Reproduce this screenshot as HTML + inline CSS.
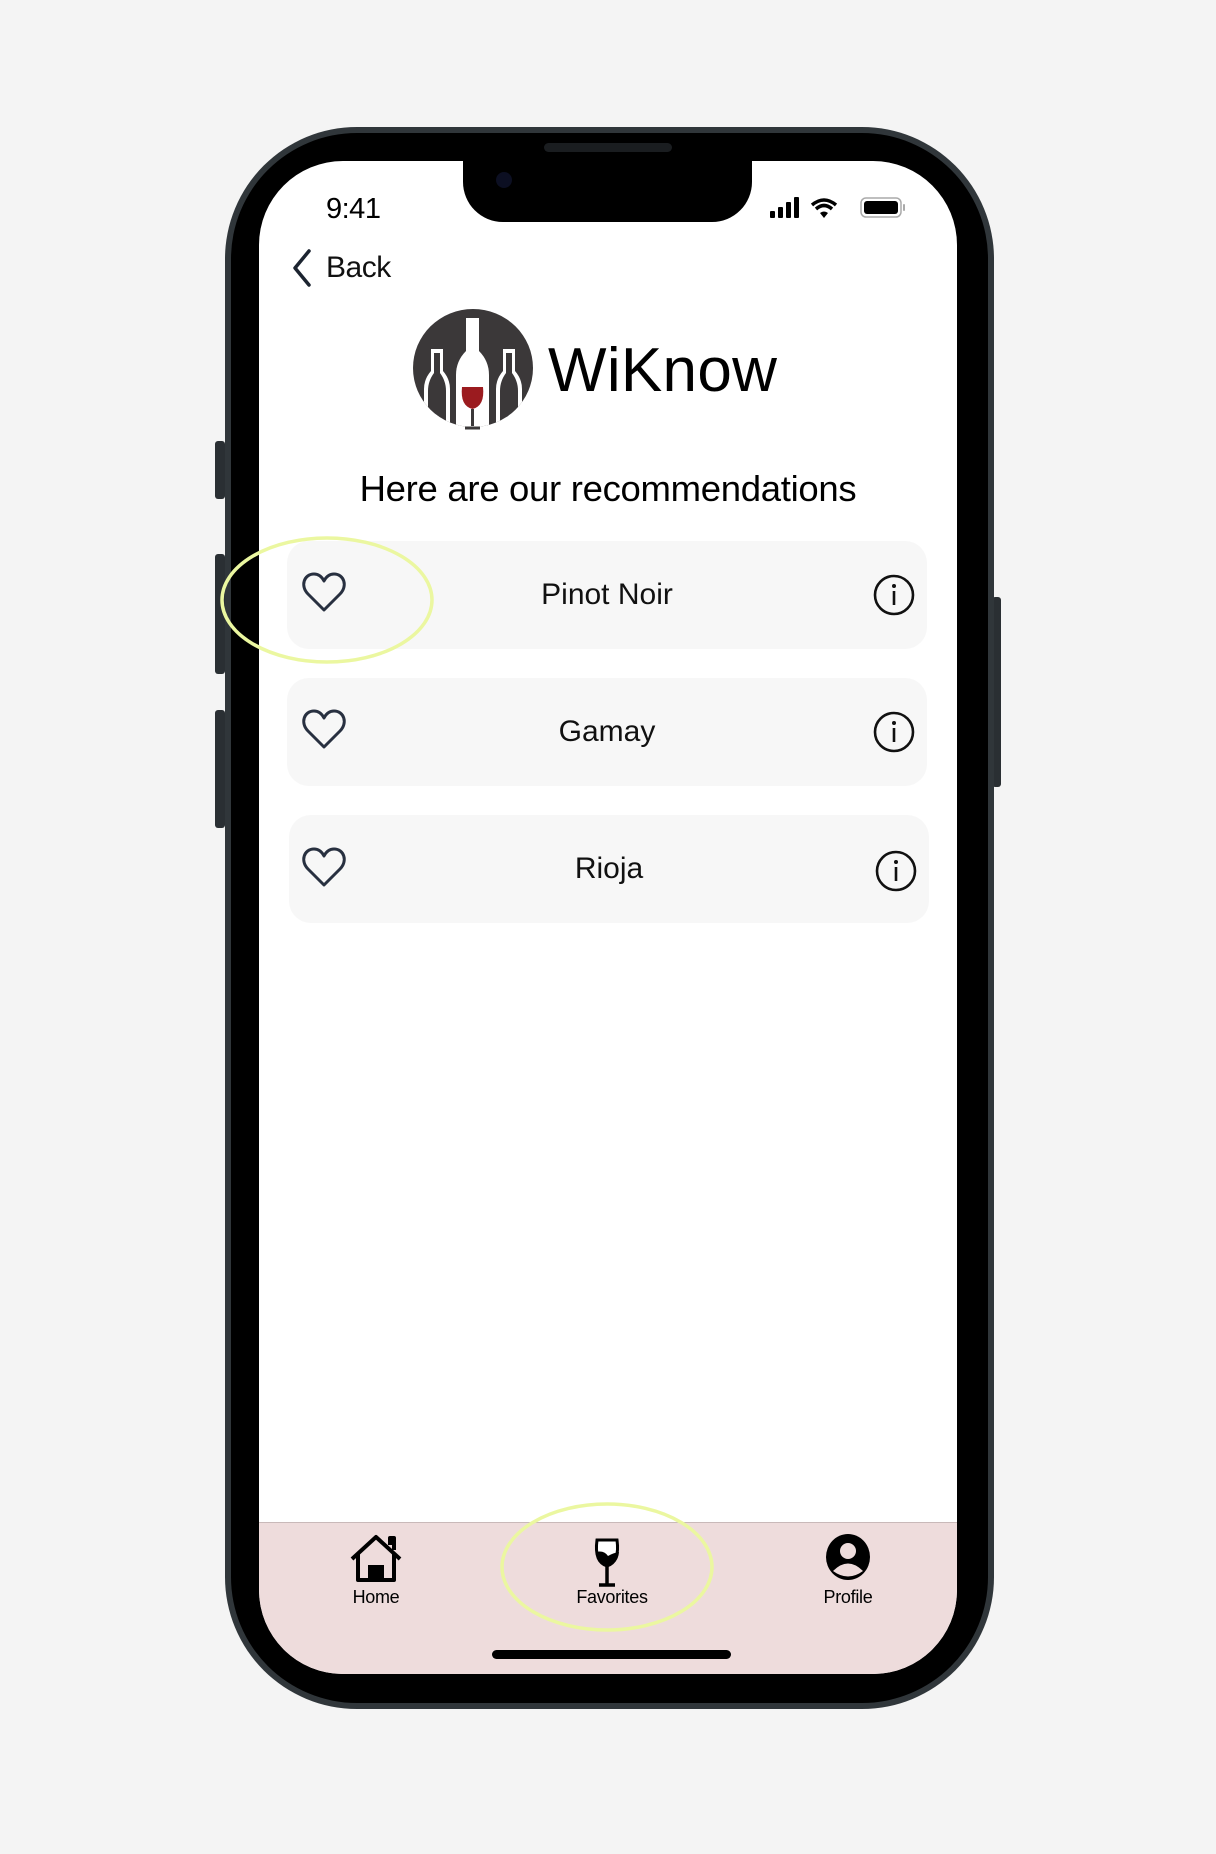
<!DOCTYPE html>
<html><head><meta charset="utf-8"><style>
*{margin:0;padding:0;box-sizing:border-box}
body{width:1216px;height:1854px;background:#f4f4f4;position:relative;overflow:hidden;font-family:"Liberation Sans",sans-serif}
.abs{position:absolute}
.btn{position:absolute;background:#2a2f33;border-radius:3px}
.card{position:absolute;left:287px;width:640px;height:108px;background:#f7f7f7;border-radius:22px}
.card .t{position:absolute;left:0;right:0;top:0;line-height:108px;text-align:center;font-size:30px;color:#111}
.lbl{position:absolute;font-size:18px;color:#000;text-align:center;width:140px;letter-spacing:-0.3px}
</style></head><body>
<div class="btn" style="left:215px;top:441px;width:10px;height:58px"></div>
<div class="btn" style="left:215px;top:554px;width:10px;height:120px"></div>
<div class="btn" style="left:215px;top:710px;width:10px;height:118px"></div>
<div class="btn" style="left:992px;top:597px;width:9px;height:190px"></div>
<div class="abs" style="left:225px;top:127px;width:769px;height:1582px;border-radius:132px;background:#30363a;"></div>
<div class="abs" style="left:231px;top:133px;width:757px;height:1570px;border-radius:126px;background:#000;"></div>
<div class="abs" style="left:259px;top:161px;width:698px;height:1513px;border-radius:84px;background:#fff;overflow:hidden">
  <div class="abs" style="left:0;top:1361px;width:698px;height:152px;background:#eedcdc;border-top:1.5px solid #c9b9b9"></div>
</div>
<div class="abs" style="left:463px;top:150px;width:289px;height:72px;background:#000;border-radius:0 0 40px 40px"></div>
<div class="abs" style="left:544px;top:143px;width:128px;height:9px;background:#1a1d20;border-radius:5px"></div>
<div class="abs" style="left:496px;top:172px;width:16px;height:16px;border-radius:50%;background:#0c0f22"></div>
<div class="abs" style="left:326px;top:193px;font-size:29px;color:#000;letter-spacing:-0.5px">9:41</div>
<svg class="abs" style="left:768px;top:196px" width="150" height="24" viewBox="0 0 150 24">
<rect x="2" y="15" width="5" height="7" rx="1"/><rect x="10" y="11" width="5" height="11" rx="1"/><rect x="18" y="6" width="5" height="16" rx="1"/><rect x="26" y="1" width="5" height="21" rx="1"/>
<path d="M44 9 Q56 -1 68 9" stroke="#000" stroke-width="3.5" fill="none"/><path d="M48 13 Q56 6 64 13" stroke="#000" stroke-width="3.5" fill="none"/><path d="M52 17 L56 22 L60 17 Q56 14 52 17Z"/>
<rect x="93" y="2" width="40" height="19" rx="5" fill="none" stroke="#aaa" stroke-width="1.5"/><rect x="96" y="5" width="34" height="13" rx="3"/><rect x="135" y="8" width="2" height="7" rx="1" fill="#aaa"/>
</svg>
<svg class="abs" style="left:290px;top:248px" width="24" height="40" viewBox="0 0 24 40"><path d="M19 3 L5 20 L19 37" stroke="#1c2430" stroke-width="3.5" fill="none" stroke-linecap="round" stroke-linejoin="round"/></svg>
<div class="abs" style="left:326px;top:251px;font-size:30px;color:#111;letter-spacing:-0.5px">Back</div>
<svg class="abs" style="left:412px;top:309px" width="122" height="122" viewBox="0 0 122 122">
<defs><clipPath id="c"><ellipse cx="61" cy="59" rx="60" ry="59"/></clipPath></defs>
<g clip-path="url(#c)">
<rect width="122" height="122" fill="#3b3839"/>
<path d="M19 40 L31 40 L31 62 Q38 70 38 80 L38 122 L12 122 L12 80 Q12 70 19 62Z" fill="#fff"/>
<path d="M91 40 L103 40 L103 62 Q110 70 110 80 L110 122 L84 122 L84 80 Q84 70 91 62Z" fill="#fff"/>
<path d="M22 44 L28 44 L28 64 Q34 72 34 82 L34 122 L16 122 L16 82 Q16 72 22 64Z" fill="#3b3839"/>
<path d="M94 44 L100 44 L100 64 Q106 72 106 82 L106 122 L88 122 L88 82 Q88 72 94 64Z" fill="#3b3839"/>
<path d="M54 9 L67 9 L67 42 Q77 52 77 66 L77 122 L44 122 L44 66 Q44 52 54 42Z" fill="#fff"/>
<rect x="0" y="100" width="14" height="22" fill="#fff"/><rect x="108" y="100" width="14" height="22" fill="#fff"/>
</g>
<path d="M50 78 L71 78 Q73 97 60.5 100 Q48 97 50 78Z" fill="#9b1b1f"/>
<path d="M60.5 100 L60.5 117 M53 119 L68 119" stroke="#3b3839" stroke-width="3"/>
</svg>
<div class="abs" style="left:548px;top:340px;font-size:62px;color:#000;letter-spacing:0.3px;line-height:62px">WiKnow</div>
<div class="abs" style="left:0;width:1216px;top:468px;text-align:center;font-size:36.5px;color:#000;letter-spacing:-0.3px">Here are our recommendations</div>

<div class="card" style="top:541px"><div class="t">Pinot Noir</div></div>
<div class="card" style="top:678px"><div class="t">Gamay</div></div>
<div class="card" style="top:815px;left:289px"><div class="t">Rioja</div></div>
<svg class="abs" style="left:0;top:0" width="1216" height="1854">
<defs><g id="h"><path d="M0 17 L-16 1 C-24 -7 -20 -19 -10 -19 C-5 -19 -2 -16 0 -12 C2 -16 5 -19 10 -19 C20 -19 24 -7 16 1 Z" fill="none" stroke="#283040" stroke-width="3" stroke-linejoin="round"/></g>
<g id="i"><circle r="19" fill="none" stroke="#111" stroke-width="2.6"/><circle cy="-9" r="2" fill="#111"/><rect x="-1.3" y="-4" width="2.6" height="14" fill="#111"/></g></defs>
<use href="#h" x="324" y="593"/><use href="#h" x="324" y="730"/><use href="#h" x="324" y="868"/>
<use href="#i" x="894" y="595"/><use href="#i" x="894" y="732"/><use href="#i" x="896" y="871"/>
<ellipse cx="327" cy="600" rx="105" ry="62" fill="none" stroke="#ebf7a0" stroke-width="3.5"/>
<path d="M352 1559 L376 1537 L400 1559 M358 1553 L358 1580 L394 1580 L394 1553 M390 1545 L390 1538 L394 1538 L394 1550" fill="none" stroke="#000" stroke-width="4" stroke-linejoin="round"/>
<rect x="368" y="1565" width="16" height="15"/>
<path d="M597 1540 L617 1540 Q620 1562 607 1566 Q594 1562 597 1540Z" fill="#fff" stroke="#000" stroke-width="3"/>
<path d="M596 1552 Q604 1550 608 1556 Q613 1553 619 1552 Q618 1564 607 1566 Q596 1564 596 1552Z" fill="#000"/>
<path d="M607 1566 L607 1584 M599 1585 L615 1585" stroke="#000" stroke-width="3.5"/>
<ellipse cx="848" cy="1557" rx="22" ry="23"/>
<circle cx="848" cy="1551" r="8" fill="#eedcdc"/>
<path d="M833 1571 Q848 1556 863 1571 Q848 1582 833 1571Z" fill="#eedcdc"/>
<ellipse cx="607" cy="1567" rx="105" ry="63" fill="none" stroke="#ebf7a0" stroke-width="3.5"/>
<rect x="492" y="1650" width="239" height="9" rx="4.5"/>
</svg>
<div class="lbl" style="left:306px;top:1587px">Home</div>
<div class="lbl" style="left:542px;top:1587px">Favorites</div>
<div class="lbl" style="left:778px;top:1587px">Profile</div>
</body></html>
